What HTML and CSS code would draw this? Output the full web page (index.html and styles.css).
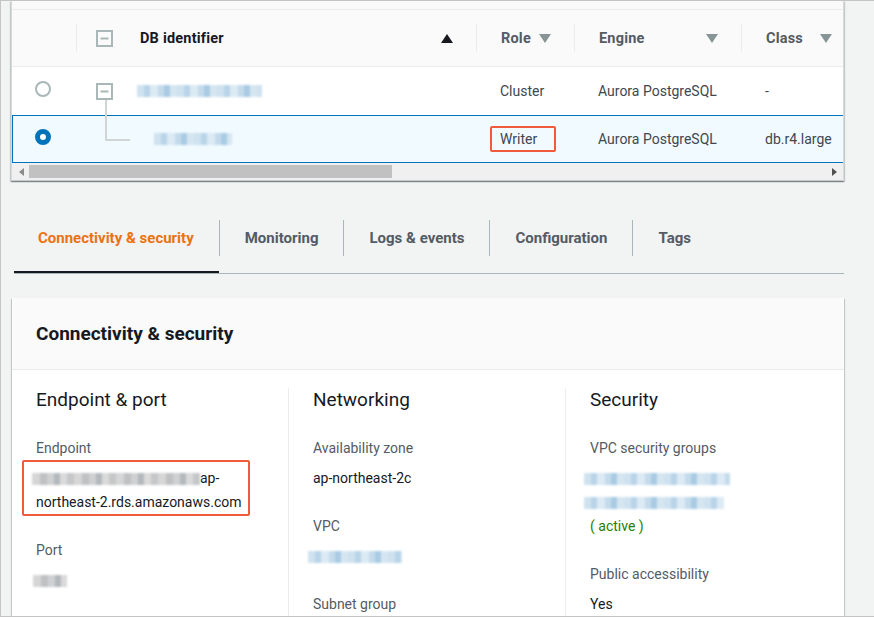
FILE: index.html
```html
<!DOCTYPE html>
<html lang="en">
<head>
<meta charset="utf-8">
<title>RDS instance</title>
<link rel="stylesheet" href="styles.css">
</head>
<body>
<div class="frame">
  <div class="table-panel">
    <div class="top-strip"></div>
    <div class="grid">
      <div class="th th-radio"></div>
      <div class="th">
        <div class="th-in th-id">
          <svg class="tree-icon" width="17" height="17" viewBox="0 0 17 17"><rect x="1" y="1" width="15" height="15" fill="none" stroke="#aab7b8" stroke-width="2"/><rect x="4.5" y="7.5" width="8" height="2" fill="#aab7b8"/></svg>
          <span class="th-label dark">DB identifier</span>
          <svg class="sort" width="12" height="9" viewBox="0 0 12 9"><path d="M6 0 L12 9 L0 9 Z" fill="#16191f"/></svg>
        </div>
      </div>
      <div class="th">
        <div class="th-in">
          <span class="th-label">Role</span>
          <svg class="sort" width="12" height="9" viewBox="0 0 12 9"><path d="M0 0 L12 0 L6 9 Z" fill="#879596"/></svg>
        </div>
      </div>
      <div class="th">
        <div class="th-in">
          <span class="th-label">Engine</span>
          <svg class="sort" width="12" height="9" viewBox="0 0 12 9"><path d="M0 0 L12 0 L6 9 Z" fill="#879596"/></svg>
        </div>
      </div>
      <div class="th">
        <div class="th-in th-last">
          <span class="th-label">Class</span>
          <svg class="sort" width="12" height="9" viewBox="0 0 12 9"><path d="M0 0 L12 0 L6 9 Z" fill="#879596"/></svg>
        </div>
      </div>

      <div class="td td-radio"><span class="radio"></span></div>
      <div class="td td-id">
        <svg class="tree-icon row-icon" width="17" height="17" viewBox="0 0 17 17"><rect x="1" y="1" width="15" height="15" fill="none" stroke="#aab7b8" stroke-width="2"/><rect x="4.5" y="7.5" width="8" height="2" fill="#aab7b8"/></svg>
        <span class="blur blur-blue w125"></span>
      </div>
      <div class="td">Cluster</div>
      <div class="td">Aurora PostgreSQL</div>
      <div class="td">-</div>

      <div class="td td-radio sel sel-first"><span class="radio radio-on"></span></div>
      <div class="td td-id sel child">
        <span class="connector"></span>
        <span class="blur blur-blue w78 child-name"></span>
      </div>
      <div class="td sel"><span class="mark">Writer</span></div>
      <div class="td sel">Aurora PostgreSQL</div>
      <div class="td sel sel-last">db.r4.large</div>
    </div>
    <div class="hscroll">
      <svg class="arr" width="5" height="8" viewBox="0 0 5 8"><path d="M5 0 L5 8 L0 4 Z" fill="#8a8a8a"/></svg>
      <div class="thumb"></div>
      <div class="track-rest"></div>
      <svg class="arr" width="5" height="8" viewBox="0 0 5 8"><path d="M0 0 L5 4 L0 8 Z" fill="#505050"/></svg>
    </div>
  </div>

  <div class="tabs">
    <div class="tab active"><span class="tab-label">Connectivity &amp; security</span></div>
    <div class="tab"><span class="tab-label">Monitoring</span></div>
    <div class="tab"><span class="tab-label">Logs &amp; events</span></div>
    <div class="tab"><span class="tab-label">Configuration</span></div>
    <div class="tab"><span class="tab-label">Tags</span></div>
  </div>

  <div class="panel">
    <div class="panel-head">Connectivity &amp; security</div>
    <div class="panel-body">
      <div class="col">
        <h3>Endpoint &amp; port</h3>
        <div class="item">
          <div class="label">Endpoint</div>
          <div class="value boxed"><span class="blur blur-gray w168"></span>ap-<br>northeast-2.rds.amazonaws.com</div>
        </div>
        <div class="item">
          <div class="label">Port</div>
          <div class="value"><span class="blur blur-gray w34"></span></div>
        </div>
      </div>
      <div class="col sep">
        <h3>Networking</h3>
        <div class="item">
          <div class="label">Availability zone</div>
          <div class="value">ap-northeast-2c</div>
        </div>
        <div class="item">
          <div class="label">VPC</div>
          <div class="value"><span class="blur blur-blue w94"></span></div>
        </div>
        <div class="item">
          <div class="label">Subnet group</div>
        </div>
      </div>
      <div class="col sep">
        <h3>Security</h3>
        <div class="item">
          <div class="label">VPC security groups</div>
          <div class="value"><span class="blur blur-blue w146"></span><br><span class="blur blur-blue w140"></span><br><span class="active">( active )</span></div>
        </div>
        <div class="item">
          <div class="label">Public accessibility</div>
          <div class="value">Yes</div>
        </div>
      </div>
    </div>
  </div>
</div>
</body>
</html>
```

FILE: styles.css
```css
* { box-sizing: border-box; }
html, body { margin: 0; padding: 0; }
body {
  font-family: Roboto, "Liberation Sans", Arial, sans-serif;
  font-size: 14px;
  color: #16191f;
  background: #f2f3f3;
}
.frame {
  width: 874px;
  height: 617px;
  border-top: 1px solid #c4c4c4;
  border-left: 1px solid #c4c4c4;
  border-bottom: 1px solid #c4c4c4;
  background: #f2f3f3;
  overflow: hidden;
}

/* ---------- table panel ---------- */
.table-panel {
  margin-left: 10px;
  width: 833px;
  background: #fff;
  border-left: 1px solid #d5dbdb;
  border-right: 1px solid #d5dbdb;
  box-shadow: 0 1px 1px 0 rgba(0,28,36,.3), 1px 1px 1px 0 rgba(0,28,36,.15), -1px 1px 1px 0 rgba(0,28,36,.15);
  overflow: hidden;
}
.top-strip {
  height: 9px;
  background: #fafafa;
  border-bottom: 1px solid #eaeded;
}
.grid {
  display: grid;
  grid-template-columns: 64px 400px 98px 167px 1fr;
}
.th {
  background: #fafafa;
  border-bottom: 1px solid #eaeded;
  padding: 14px 0;
  height: 57px;
}
.th-in {
  height: 28px;
  border-left: 1px solid #eaeded;
  display: flex;
  align-items: center;
  justify-content: space-between;
  padding: 0 23px 0 24px;
}
.th-id { padding-left: 19px; justify-content: flex-start; }
.th-id .th-label { margin-left: 27px; }
.th-id .sort { margin-left: auto; }
.th-last { padding-right: 11px; }
.th-label {
  font-weight: 700;
  font-size: 14.5px;
  letter-spacing: 0.2px;
  color: #545b64;
  white-space: nowrap;
}
.th-label.dark { color: #16191f; }
.sort { display: block; flex: none; }
.tree-icon { display: block; flex: none; }

.td {
  height: 48px;
  display: flex;
  align-items: center;
  padding-left: 24px;
  color: #414750;
  white-space: nowrap;
  background: #fff;
}
.td-radio { padding-left: 23px; }
.td-id { padding-left: 20px; }
.row-icon { margin-right: 24px; }
.td.sel {
  background: #f1faff;
  border-top: 1px solid #0073bb;
  border-bottom: 1px solid #0073bb;
  height: 48px;
}
.sel-first { border-left: 1px solid #0073bb; padding-left: 22px; }
.child { position: relative; }
.connector {
  position: absolute;
  left: 29px;
  top: -16px;
  width: 25px;
  height: 41px;
  border-left: 2px solid #d0d6d6;
  border-bottom: 2px solid #d0d6d6;
}
.child-name { margin-left: 58px; }

.radio {
  display: block;
  width: 16px;
  height: 16px;
  border-radius: 50%;
  border: 2px solid #aab7b8;
  background: #fff;
  margin-bottom: 5px;
}
.radio-on {
  border: 5px solid #0073bb;
  background: #fff;
}
.mark {
  display: inline-block;
  margin-left: -10px;
  border: 2px solid #ef5b3c;
  border-radius: 2px;
  padding: 1px 17px 1px 8px;
  line-height: 20px;
}

.hscroll {
  height: 18px;
  background: #f0f0f0;
  border-bottom: 1px solid #c8c8c8;
  display: flex;
  align-items: center;
  padding: 0 6px 0 7px;
}
.arr { display: block; flex: none; }
.thumb {
  width: 363px;
  height: 13px;
  background: #c1c1c1;
  margin-left: 5px;
}
.track-rest { flex: 1; }

/* ---------- blurred placeholders ---------- */
.blur {
  display: inline-block;
  height: 12px;
  vertical-align: middle;
  filter: blur(1.2px);
}
.blur-blue {
  background:
    repeating-linear-gradient(90deg, #cfe2ef 0 7px, #b9d4e8 7px 13px, #dceaf4 13px 21px, #c4dbec 21px 27px, #a9cbe3 27px 33px, #d6e6f1 33px 40px);
}
.blur-gray {
  background:
    repeating-linear-gradient(90deg, #d6d6d6 0 8px, #bfc1c3 8px 15px, #cfd0d1 15px 22px, #b3b8bd 22px 28px, #dadada 28px 35px, #c5c7c9 35px 42px);
}
.w125 { width: 125px; }
.w78 { width: 78px; }
.w168 { width: 168px; margin-left: -4px; }
.w34 { width: 34px; margin-left: -3px; }
.w94 { width: 94px; margin-left: -5px; }
.w146 { width: 146px; margin-left: -6px; }
.w140 { width: 140px; margin-left: -6px; }

/* ---------- tabs ---------- */
.tabs {
  margin: 0 30px 0 13px;
  padding-top: 10px;
  display: flex;
  border-bottom: 1px solid #aab7b8;
}
.tab {
  padding: 29px 0 15px;
  border-bottom: 2px solid transparent;
}
.tab.active { border-bottom-color: #16191f; }
.tab-label {
  display: block;
  height: 36px;
  line-height: 36px;
  padding: 0 25px 0 24px;
  font-size: 15px;
  font-weight: 700;
  color: #545b64;
  white-space: nowrap;
}
.tab.active .tab-label { color: #ec7211; }
.tab + .tab .tab-label { border-left: 1px solid #aab7b8; padding-left: 25px; }

/* ---------- details panel ---------- */
.panel {
  margin: 24px 0 0 11px;
  width: 832px;
  background: #fff;
  box-shadow: 0 1px 1px 0 rgba(0,28,36,.3), 1px 1px 1px 0 rgba(0,28,36,.15), -1px 1px 1px 0 rgba(0,28,36,.15);
}
.panel-head {
  height: 72px;
  background: #fafafa;
  border-bottom: 1px solid #eaeded;
  padding: 24px 24px 0;
  font-size: 19px;
  font-weight: 700;
  line-height: 24px;
}
.panel-body {
  display: grid;
  grid-template-columns: 276px 277px 1fr;
  padding-top: 18px;
}
.col {
  padding-left: 24px;
  min-height: 240px;
}
.col.sep { border-left: 1px solid #eaeded; }
.col h3 {
  margin: 0 0 24px;
  font-size: 19px;
  font-weight: 400;
  line-height: 24px;
  color: #16191f;
}
.item { margin-bottom: 24px; }
.label {
  color: #545b64;
  line-height: 24px;
}
.value {
  margin-top: 6px;
  line-height: 24px;
  color: #16191f;
}
.boxed {
  margin: 0 0 -2px -14px;
  width: 228px;
  padding: 4px 6px 0 12px;
  border: 2px solid #ef5b3c;
  border-radius: 2px;
  line-height: 24px;
  white-space: nowrap;
}
.active { color: #1d8102; }
```
